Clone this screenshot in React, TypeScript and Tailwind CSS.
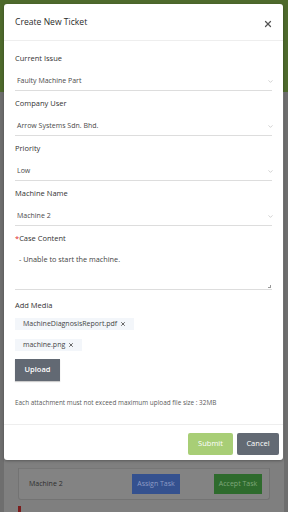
import React from 'react';
import { ChevronDown, X } from 'lucide-react';

const fields = [
  { label: 'Current Issue', value: 'Faulty Machine Part' },
  { label: 'Company User', value: 'Arrow Systems Sdn. Bhd.' },
  { label: 'Priority', value: 'Low' },
  { label: 'Machine Name', value: 'Machine 2' },
];

const files = ['MachineDiagnosisReport.pdf', 'machine.png'];

function App() {
  return (
    <div
      className="relative w-[288px] h-[512px] overflow-hidden bg-[#7c7c7c]"
      style={{ fontFamily: '"Open Sans", "Noto Sans", sans-serif' }}
    >
      {/* page behind the overlay */}
      <div className="h-[92px] bg-[#4e6a2c]" />
      <div className="flex h-[420px] bg-[#7f7f7f] border-l-[4px] border-r-[4px] border-[#6e6e6e]">
        <div className="flex-1 px-[14px]">
          <div className="mt-[376px] h-[32px] rounded-b-[3px] border border-t-0 border-[#737373] bg-[#838383]">
            <div className="flex h-full items-center justify-between border-t border-[#777777] pl-[10px] pr-[7px]">
              <span className="text-[7px] text-[#2e2e2e]">Machine 2</span>
              <div className="flex items-center gap-[34px]">
                <button className="h-[20px] w-[48px] bg-[#34518f] text-[7px] text-[#8d9cc5]">Assign Task</button>
                <button className="h-[20px] w-[48px] bg-[#2e6b2d] text-[7px] text-[#7fa77b]">Accept Task</button>
              </div>
            </div>
          </div>
          <div className="mt-[6px] h-[10px] w-[3px] bg-[#7a1c1c]" />
        </div>
      </div>

      {/* modal */}
      <div className="absolute left-[4px] top-[4px] w-[279px] h-[456px] rounded-[3px] bg-white shadow-[0_1px_3px_rgba(0,0,0,0.3)] flex flex-col">
        <div className="flex h-[37px] items-center justify-between border-b border-[#eeeeee] pl-[11px] pr-[10px]">
          <span className="text-[8.6px] text-[#2b2b2b]">Create New Ticket</span>
          <X className="mt-[4px] h-[10px] w-[10px] text-[#555555]" strokeWidth={3} />
        </div>

        <div className="flex-1 px-[11px] pt-[12px]">
          {fields.map((f) => (
            <div key={f.label} className="mb-[7px]">
              <div className="h-[10px] text-[7.5px] leading-[10px] font-medium text-[#333333]">{f.label}</div>
              <div className="mt-[4px] flex h-[24px] items-end justify-between border-b border-[#dddddd] pb-[4px] pl-[2px] text-[7px] leading-[10px]">
                <span className="text-[#4a4a4a]">{f.value}</span>
                <ChevronDown className="-mr-[2px] mb-[1px] h-[7px] w-[7px] text-[#999999]" strokeWidth={1.5} />
              </div>
            </div>
          ))}

          <div className="h-[10px] text-[7.5px] leading-[10px] font-medium text-[#333333]">
            <span className="text-[#e0262a]">*</span>Case Content
          </div>
          <div className="relative mt-[3px] h-[44px] border-b border-[#dddddd] pl-[4px] pt-[8px] text-[7.3px] leading-[10px]">
            <span className="text-[#444444]">- Unable to start the machine.</span>
            <span className="absolute bottom-[1px] right-[1px] h-[3px] w-[3px] border-b border-r border-[#999999]" />
          </div>

          <div className="mt-[10px] h-[10px] text-[7.5px] leading-[10px] font-medium text-[#333333]">Add Media</div>
          <div className="mt-[8px] flex flex-col items-start gap-[9px]">
            {files.map((name) => (
              <div key={name} className="flex h-[12px] items-center gap-[3px] bg-[#f3f6fa] pl-[8px] pr-[8px]">
                <span className="text-[7px] text-[#444444]">{name}</span>
                <X className="h-[6px] w-[6px] text-[#555555]" strokeWidth={3.5} />
              </div>
            ))}
          </div>
          <button className="mt-[8px] h-[22px] w-[45px] bg-[#626973] text-[7.5px] font-semibold text-white shadow-[0_1px_1px_rgba(0,0,0,0.2)]">
            Upload
          </button>
          <div className="mt-[17px] text-[6.4px] text-[#5a5a5a]">
            Each attachment must not exceed maximum upload file size : 32MB
          </div>
        </div>

        <div className="flex h-[36px] items-start justify-end gap-[4px] border-t border-[#eeeeee] pr-[4px] pt-[8px]">
          <button className="h-[22px] w-[45px] rounded-[2px] bg-[#a8ce76] text-[7.5px] text-white">Submit</button>
          <button className="h-[22px] w-[42px] rounded-[2px] bg-[#636a74] text-[7.5px] text-white">Cancel</button>
        </div>
      </div>
    </div>
  );
}

export default App;
